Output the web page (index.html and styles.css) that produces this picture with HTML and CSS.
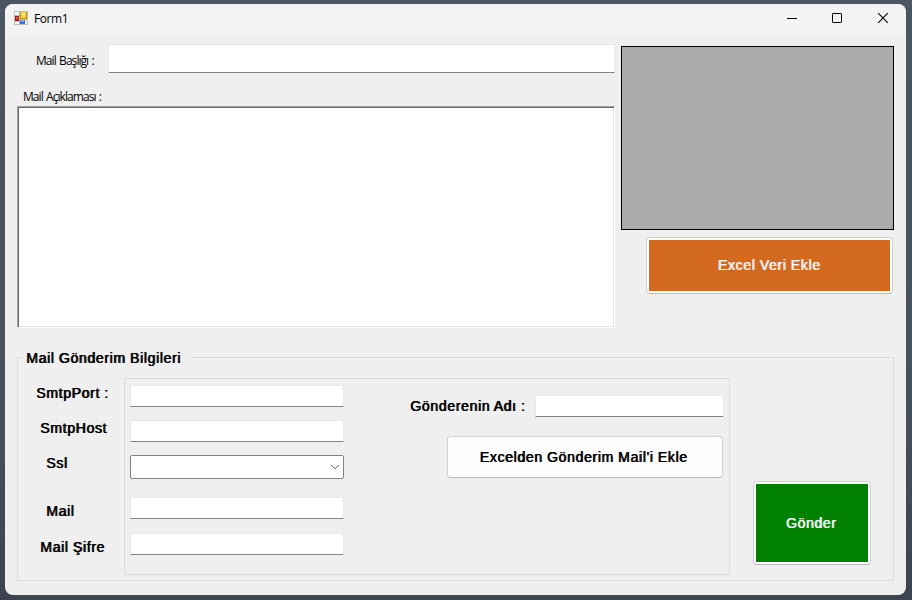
FILE: index.html
```html
<!DOCTYPE html>
<html lang="tr">
<head>
<meta charset="utf-8">
<title>Form1</title>
<link rel="stylesheet" href="styles.css">
</head>
<body>
<main class="window">
  <header class="titlebar">
    <svg class="app-icon" width="14" height="14" viewBox="0 0 14 14">
      <path fill="#bdbdbd" d="M0 0h14v14H0z"/>
      <path fill="#f5f5f5" d="M1 1h4v3H1zM1 11h4v2H1z"/>
      <path fill="#a91f12" d="M1 5h4v5H1z"/><path fill="#e45b4c" d="M2 6h2v2H2z"/>
      <path fill="#c88a00" d="M6 1h7v7H6z"/><path fill="#ffd03c" d="M7 1h5v6H7z"/><path fill="#ffe69a" d="M7 2h4v2H7z"/>
      <path fill="#f5f5f5" d="M6 9h7v4H6z"/><path fill="#3a6fd0" d="M6 9h5v4H6z"/><path fill="#7eaaf0" d="M7 9h3v2H7z"/>
    </svg>
    <span class="title">Form1</span>
    <div class="controls">
      <svg width="12" height="12"><path d="M2 6.5h10" stroke="#000"/></svg>
      <svg width="12" height="12"><rect x="1.5" y="1.5" width="9" height="9" rx=".6" fill="none" stroke="#000"/></svg>
      <svg width="12" height="12"><path d="M1.2 1.2l9.6 9.6M10.8 1.2l-9.6 9.6" stroke="#000" stroke-width="1.1"/></svg>
    </div>
  </header>
  <div class="top">
    <section class="compose">
      <div class="subject"><label class="small">Mail Başlığı :</label><input class="field"></div>
      <label class="small body-label">Mail Açıklaması :</label>
      <textarea class="body-text"></textarea>
    </section>
    <section class="data">
      <div class="grid"></div>
      <button class="btn colored orange"><span>Excel Veri Ekle</span></button>
    </section>
  </div>
  <section class="group">
    <h2 class="legend"><span>Mail Gönderim Bilgileri</span></h2>
    <div class="group-body">
      <div class="labels">
        <label class="port">SmtpPort :</label>
        <label class="host">SmtpHost</label>
        <label class="ssl">Ssl</label>
        <label class="mail">Mail</label>
        <label class="pass">Mail Şifre</label>
      </div>
      <div class="panel">
        <div class="inputs">
          <input class="field">
          <input class="field">
          <div class="combo"><svg width="10" height="6"><path d="M1 .8l4 4 4-4" fill="none" stroke="#555"/></svg></div>
          <input class="field">
          <input class="field">
        </div>
        <div class="sender">
          <div class="sender-row"><label>Gönderenin Adı :</label><input class="field"></div>
          <button class="btn plain"><span>Excelden Gönderim Mail'i Ekle</span></button>
        </div>
      </div>
      <button class="btn colored green"><span>Gönder</span></button>
    </div>
  </section>
</main>
</body>
</html>
```
FILE: styles.css
```css
* { box-sizing: border-box; }
body {
  margin: 0;
  width: 912px;
  height: 600px;
  padding: 4px 6px 5px 5px;
  overflow: hidden;
  background: linear-gradient(#4b5563, #48525f 60%, #3d444f);
  font: 14px/18px "Liberation Sans", sans-serif;
  color: #000;
}
.window {
  height: 591px;
  border-radius: 8px;
  background: #efefef;
  overflow: hidden;
}
.titlebar {
  display: flex;
  align-items: center;
  height: 30px;
  padding: 0 17px 2px 9px;
  background: #f3f3f3;
}
.app-icon { display: block; }
.title {
  margin: 2px 0 0 6px;
  font: 12px/16px "Open Sans", sans-serif;
  letter-spacing: -0.4px;
}
.controls { display: flex; gap: 34px; margin-left: auto; }
.controls svg { display: block; }
.top {
  display: flex;
  justify-content: space-between;
  height: 294px;
  padding: 10px 12px 0 12px;
}
.compose { width: 598px; }
.subject { display: flex; height: 29px; }
.small {
  font: 12px/16px "Open Sans", sans-serif;
  letter-spacing: -0.95px;
  word-spacing: 1.2px;
  white-space: nowrap;
}
.subject .small { width: 91px; padding: 9px 0 0 19px; }
.body-label { display: block; margin: 16px 0 1px 6px; }
.field {
  display: block;
  min-width: 0;
  flex: 1;
  margin: 0;
  padding: 0 4px;
  border: 1px solid #e8e8e8;
  border-bottom-color: #838383;
  border-radius: 1px;
  background: #fff;
  outline: 0;
}
.body-text {
  display: block;
  width: 598px;
  height: 222px;
  margin: 0;
  resize: none;
  outline: 0;
  border: 1px solid;
  border-color: #a0a0a0 #fff #fff #a0a0a0;
  box-shadow: inset 1px 1px #696969, inset -1px -1px #e3e3e3;
}
.data {
  display: flex;
  flex-direction: column;
  align-items: flex-end;
  gap: 7px;
  width: 273px;
  padding-top: 2px;
}
.grid { width: 273px; height: 184px; border: 1px solid #000; background: #ababab; }
.btn {
  margin: 0;
  padding: 0;
  border: 1px solid #d0d0d0;
  border-bottom-color: #bababa;
  border-radius: 4px;
  background: #fdfdfd;
  color: #000;
  font: inherit;
}
.btn span, .labels label, .legend span, .sender label {
  font-size: 14px;
  font-weight: normal;
  letter-spacing: 0.67px;
  word-spacing: -0.3px;
  text-shadow: 0.8px 0 currentColor;
  white-space: nowrap;
}
.colored { padding: 2px; color: #f0f0f0; background: #fff; }
.colored span { display: flex; align-items: center; justify-content: center; height: 100%; padding-bottom: 1px; }
.orange { width: 247px; height: 57px; margin-right: 1px; }
.orange span { background: #d2691e; padding-right: 1px; }
.green { width: 118px; height: 84px; margin: 103px 0 0 23px; }
.green span { background: #008000; padding: 0 2px 0 0; }
.group {
  width: 877px;
  height: 224px;
  margin: 29px 0 0 12px;
  border: 1px solid #dcdcdc;
}
.legend { height: 20px; margin: -9px 0 0 5px; line-height: 18px; font-size: 14px; }
.legend span { display: inline-block; width: 167px; padding-left: 3px; background: #efefef; }
.group-body { display: flex; height: 207px; align-items: flex-start; padding-top: 9px; }
.labels { display: flex; flex-direction: column; width: 106px; padding-top: 6px; }
.labels label { height: 18px; margin-bottom: 17px; }
.labels .port { margin-left: 18px; }
.labels .host { margin-left: 22px; }
.labels .ssl { margin-left: 28px; margin-bottom: 30px; }
.labels .mail { margin-left: 28px; margin-bottom: 18px; }
.labels .pass { margin-left: 22px; }
.panel {
  display: flex;
  justify-content: space-between;
  width: 606px;
  height: 197px;
  padding: 6px 5px 0 5px;
  border: 1px solid #dcdcdc;
}
.inputs { width: 214px; }
.inputs .field { width: 214px; height: 22px; margin-bottom: 13px; }
.combo {
  display: flex;
  align-items: center;
  justify-content: flex-end;
  height: 24px;
  margin-bottom: 18px;
  padding-right: 3px;
  border: 1px solid #838383;
  border-radius: 2px;
  background: #fff;
}
.inputs .combo + .field { margin-bottom: 14px; }
.sender { width: 314px; padding-top: 10px; }
.sender-row { display: flex; height: 22px; justify-content: space-between; }
.sender-row label { padding-top: 2px; }
.sender .field { flex: 0 0 189px; }
.plain { display: block; width: 276px; height: 42px; margin: 19px 1px 0 auto; padding-right: 3px; }
```
